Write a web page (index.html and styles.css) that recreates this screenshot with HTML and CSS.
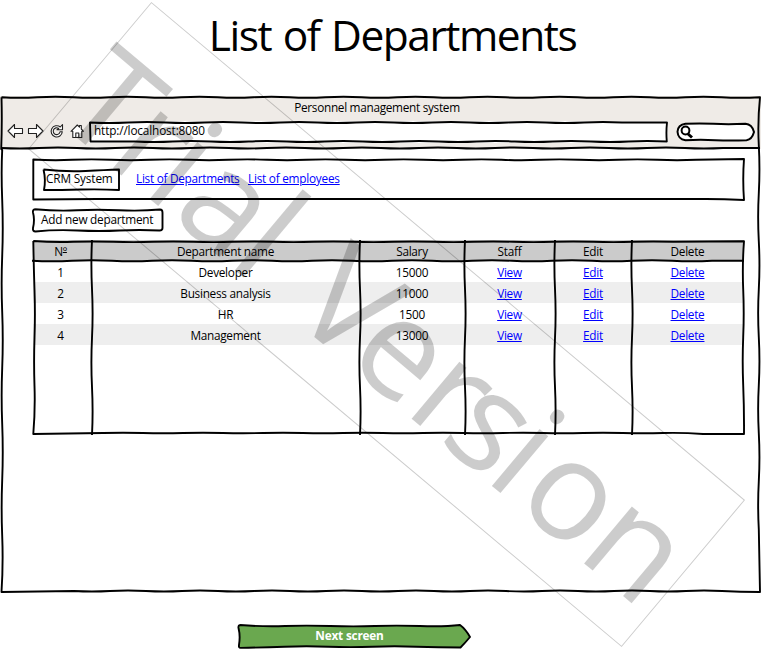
FILE: index.html
```
<!DOCTYPE html>
<html lang="en">
<head>
<meta charset="utf-8">
<title>List of Departments</title>
<link rel="stylesheet" href="styles.css">
</head>
<body>
<h1 class="title"><span>List of Departments</span></h1>

<main class="window">
  <svg class="frame" viewBox="0 0 761 500" aria-hidden="true">
    <path d="M1.500 1.300q18 1 36 0t36 0t36 0t36 0t36 0t36 0t36 0t36 0t36 0t36 0t36 0t36 0t36 0t36 0t36 0t36 0t36 0t36 0t36 0t36 0T760 1.300q-2.500 24 -1.200 48t0 48t0 48t0 48t0 48t0 48t0 48t0 48t0 48L760 496q-20 0 -38 -1t-36 0t-36 0t-36 0t-36 0t-36 0t-36 0t-36 0t-36 0t-36 0t-36 0t-36 0t-36 0t-36 0t-36 0t-36 0t-36 0t-36 0t-36 0L1.500 496q1.800 -28 .7 -56t0 -56t0 -56t0 -56t0 -56t0 -56t0 -56t0 -50L1.200 53q1 -26 .3 -51.700"/>
    <path d="M1 52q19 1 38 0t38 0t38 0t38 0t38 0t38 0t38 0t38 0t38 0t38 0t38 0t38 0t38 0t38 0t38 0t38 0t38 0t38 0t38 0H760"/>
  </svg>
  <header class="chrome">
    <div class="chrome-title"><span>Personnel management system</span></div>
    <div class="toolbar">
      <svg class="nav-icons" viewBox="0 0 88 20" aria-hidden="true">
        <path d="M8 10l6.500-6.500v4h8v5h-8v4zM43 10l-6.500-6.500v4h-8v5h8v4z"/>
        <path d="M60.300 6a5.600 5.600 0 1 0 2 4.800h-2.300a3.400 3.400 0 1 1 -1.300 -3.300l-1.700 1.300h5.500v-5.300z"/>
        <path d="M71 10.300l6.300-6.300 2.200 2.200v-1.700h1.800v3.500l2.200 2.300h-1.700v6.200h-9v-6.200zM75.800 16.500v-4.500h3v4.500"/>
      </svg>
      <div class="address">
        <svg class="frame" viewBox="0 0 579 22" aria-hidden="true"><path d="M1 1.500q19 1 38 0t38 0t38 0t38 0t38 0t38 0t38 0t38 0t38 0t38 0t38 0t38 0t38 0t38 0L578 1.500Q577 11 577.800 20.500q-20 -1 -38 0t-38 0t-38 0t-38 0t-38 0t-38 0t-38 0t-38 0t-38 0t-38 0t-38 0t-38 0t-38 0t-38 0H1.500z"/></svg>
        <span>http://localhost:8080</span>
      </div>
      <div class="search">
        <svg viewBox="0 0 80 20" aria-hidden="true"><path class="pill" d="M9.500 1.800q14 -.8 28 0t32 0q6.500 .5 8.500 8.200q-2 7.500-7.500 8.200q-16 .8 -31 0t-30 0q-7.500-1-8-8.500q.5-7 8-7.900z"/><circle cx="9.500" cy="8.500" r="3.900"/><path class="handle" d="M11.500 11.500l4.500 4"/></svg>
      </div>
    </div>
  </header>

  <section class="page">
    <nav class="navbar">
      <svg class="frame" viewBox="0 0 713 43" aria-hidden="true"><path d="M1.300 1.500q20 1.200 39 .3t39 0t39 0t39 0t39 0t39 0t39 0t39 0t39 0t39 0t39 0t39 0t39 0t39 0t39 0t39 0t39 0L712 1q-1.500 20 0 41q-20 -1 -38 -1t-38 0t-38 0t-38 0t-38 0t-38 0t-38 0t-38 0t-38 0t-38 0t-38 0t-38 0t-38 0t-38 0t-38 0t-38 0t-38 0L1.300 41.500z"/></svg>
      <div class="brand">
        <svg class="frame" viewBox="0 0 79 24" aria-hidden="true"><path d="M1.500 1.500q22 2.500 42 1.500t33.500 -1.500V22q-18 -1 -38 -.5t-37 .5q2 -10 -.5 -20.500"/></svg>
        <span>CRM System</span>
      </div>
      <a class="link-departments" href="#">List of Departments</a>
      <a class="link-employees" href="#">List of employees</a>
    </nav>

    <div class="add">
      <svg class="frame" viewBox="0 0 132 25" aria-hidden="true"><path d="M3 1.300q22 2 42 1t42 0t41 -.8q2.500 0 2.500 3V20q0 2.500 -3 2.500q-20 -1 -40 0t-42 0t-42 1q-3 0 -2.500 -3.500q2 -8 0 -15.500q-.5 -3 2 -3.200"/></svg>
      <span>Add new department</span>
    </div>

    <div class="grid">
      <svg class="frame" viewBox="0 0 713 196" aria-hidden="true">
        <path d="M1.300 1q20 1.500 40 .8t40 0t40 0t40 0t40 0t40 0t40 0t40 0t40 0t40 0t40 0t40 0t40 0t40 0t40 0t40 0L712 1.200q-1.800 24 -.8 48t0 48t0 48t.8 48.800H671q-20 -1.500 -40 -1t-40 0t-40 0t-40 0t-40 0t-40 0t-40 0t-40 0t-40 0t-40 0t-40 0t-40 0t-40 0t-40 0t-40 0L1.300 194q2 -24 1.200 -48t0 -48t0 -48t-1.200 -49"/>
        <path d="M0 20.800q20 1 40 0t40 0t40 0t40 0t40 0t40 0t40 0t40 0t40 0t40 0t40 0t40 0t40 0t40 0t40 0t40 0t40 0H712"/>
        <path d="M60 0q-1.200 24.500 0 49t0 49t0 49t0 48M328 0q-1.200 24.500 0 49t0 49t0 49t0 48M433 0q-1.200 24.500 0 49t0 49t0 49t0 48M523 0q-1.200 24.500 0 49t0 49t0 49t0 48M600 0q-1.200 24.500 0 49t0 49t0 49t0 48"/>
      </svg>
      <table>
        <colgroup><col class="c-num"><col class="c-name"><col class="c-salary"><col class="c-staff"><col class="c-edit"><col class="c-delete"></colgroup>
        <thead><tr><th>N<span class="ordinal">º</span></th><th>Department name</th><th>Salary</th><th>Staff</th><th>Edit</th><th>Delete</th></tr></thead>
        <tbody>
          <tr><td>1</td><td>Developer</td><td>15000</td><td><a href="#">View</a></td><td><a href="#">Edit</a></td><td><a href="#">Delete</a></td></tr>
          <tr><td>2</td><td>Business analysis</td><td>11000</td><td><a href="#">View</a></td><td><a href="#">Edit</a></td><td><a href="#">Delete</a></td></tr>
          <tr><td>3</td><td>HR</td><td>1500</td><td><a href="#">View</a></td><td><a href="#">Edit</a></td><td><a href="#">Delete</a></td></tr>
          <tr><td>4</td><td>Management</td><td>13000</td><td><a href="#">View</a></td><td><a href="#">Edit</a></td><td><a href="#">Delete</a></td></tr>
        </tbody>
      </table>
    </div>
  </section>
</main>

<div class="next">
  <svg class="frame" viewBox="0 0 234 25" aria-hidden="true"><path class="arrow" d="M3 1q24 1.800 45 1t45 0t45 0t45 0t40 -1q5.500 4 10 12q-5 6 -9.500 10.500q-22 0 -44 -.8t-44 0t-44 0t-44 0t-44 1.200q-2 0 -1.500 -3q1.500 -9 -.5 -17q-.5 -2.500 1.500 -2.900"/></svg>
  <span>Next screen</span>
</div>

<svg class="watermark" viewBox="0 0 761 649">
  <g transform="translate(386.500 324.500) rotate(40)">
    <rect x="-387" y="-95.500" width="774" height="191"/>
    <text x="-390 -322 -274 -237 -163 -120 -83 -9 68 112.500 172.500 211 293" y="56">Trial Version</text>
  </g>
</svg>
</body>
</html>
```
FILE: styles.css
```
* { box-sizing: border-box; }

body {
  margin: 0;
  width: 761px;
  height: 649px;
  position: relative;
  overflow: hidden;
  background: #fff;
  color: #000;
  font: 11.8px/16px "Open Sans", "Noto Sans", sans-serif;
  letter-spacing: -0.28px;
}

.title {
  margin: 0;
  height: 96px;
  padding: 5px 0 0 24px;
  text-align: center;
  font-size: 42.5px;
  line-height: 60px;
  font-weight: 400;
  letter-spacing: -1.5px;
  word-spacing: 2px;
}

.frame {
  position: absolute;
  inset: 0;
  width: 100%;
  height: 100%;
  fill: none;
  stroke: #000;
  stroke-width: 1.9;
  stroke-linejoin: round;
  overflow: visible;
}

.window { position: relative; height: 497px; }
.window > .frame { height: 500px; }

.chrome { height: 53px; background: #efebe7; }
.chrome-title { height: 25px; padding: 3px 7px 0 0; text-align: center; letter-spacing: -0.3px; }

.toolbar { display: flex; align-items: center; height: 22px; }
.nav-icons {
  width: 88px;
  height: 20px;
  margin-top: -2px;
  fill: #fff;
  stroke: #222;
  stroke-width: 1.1;
  stroke-linejoin: round;
}
.address {
  position: relative;
  width: 579px;
  height: 22px;
  margin-left: 1px;
  padding: 1px 0 0 5px;
  background: #fff;
  letter-spacing: -0.15px;
}
.address span { position: relative; }
.search { width: 80px; height: 20px; margin: 0 0 0 8px; }
.search svg { display: block; fill: #fff; stroke: #000; stroke-width: 2; }
.search .handle { stroke-width: 3; }

.page { padding: 9px 0 0 32px; }

.navbar { position: relative; display: flex; width: 713px; height: 43px; padding: 10px 0 0 10px; }
.brand { position: relative; width: 79px; height: 24px; padding: 2px 0 0 4px; letter-spacing: -0.15px; }
.navbar a { margin-top: 2px; }
.link-departments { margin-left: 15px; width: 103px; }
.link-employees { margin-left: 9px; letter-spacing: -0.24px; }
a { color: #00f; text-underline-offset: 1px; white-space: nowrap; }

.add { position: relative; width: 132px; height: 25px; margin-top: 7px; padding: 3px 0 0 9px; letter-spacing: -0.24px; }
.add span { white-space: nowrap; }

.grid { position: relative; width: 713px; height: 196px; margin-top: 7px; }
.grid table { width: 711px; margin-left: 1px; border-collapse: collapse; table-layout: fixed; }
.grid th, .grid td { height: 21px; padding: 0 1px 0 0; text-align: center; font-weight: 400; line-height: 20px; }
.grid th { background: #cbcbcb; }
.grid td:first-child, .grid th:first-child { padding-right: 4px; }
.grid tbody tr:nth-child(even) { background: #eee; }
.grid .ordinal { text-decoration: underline; text-decoration-thickness: 1px; text-underline-offset: -4px; text-decoration-skip-ink: none; }
.c-num { width: 59px; }
.c-name { width: 268px; }
.c-salary { width: 105px; }
.c-staff { width: 90px; }
.c-edit { width: 77px; }
.c-delete { width: 112px; }

.next {
  position: relative;
  width: 234px;
  height: 25px;
  margin: 31px 0 0 237px;
  padding: 3px 9px 0 0;
  text-align: center;
  color: #fff;
  font-weight: 700;
  letter-spacing: -0.2px;
}
.next span { position: relative; }
.arrow { fill: #6aa84f; }

.watermark {
  position: absolute;
  inset: 0;
  width: 761px;
  height: 649px;
  pointer-events: none;
}
.watermark rect { fill: none; stroke: rgba(0, 0, 0, 0.2); stroke-width: 1; }
.watermark text { font-size: 139px; letter-spacing: 0; fill: rgba(0, 0, 0, 0.2); }
```
